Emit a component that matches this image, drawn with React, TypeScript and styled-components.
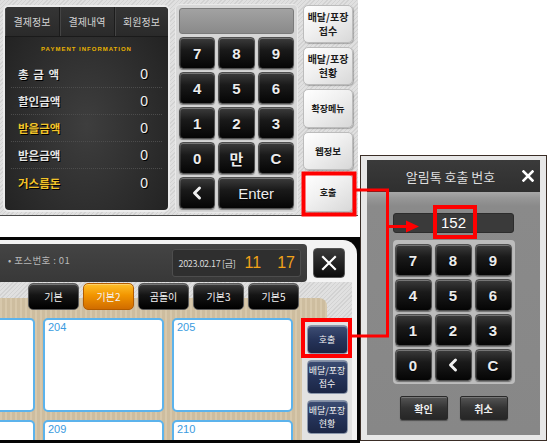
import React from 'react';
import styled, { createGlobalStyle } from 'styled-components';
import { ChevronLeft } from 'lucide-react';

const Global = createGlobalStyle`
  html, body { margin: 0; padding: 0; background: #fff; }
  body {
    width: 547px; height: 443px; overflow: hidden;
    font-family: "Noto Sans CJK KR", "Liberation Sans", sans-serif;
  }
  * { box-sizing: border-box; }
`;

const Canvas = styled.div`
  position: relative;
  width: 547px;
  height: 443px;
  background: #fff;
  overflow: hidden;
`;

const stripes = `repeating-linear-gradient(135deg, #d2d2d2 0px, #d2d2d2 1px, #e0e0e0 1px, #e0e0e0 3px)`;

/* ---------- shared keypad key ---------- */
const Key = styled.div<{ $span?: number; $small?: boolean }>`
  grid-column: span ${p => p.$span ?? 1};
  display: flex;
  align-items: center;
  justify-content: center;
  border-radius: 4px;
  border: 1px solid #4f4f4f;
  background: linear-gradient(180deg, #3c3c3c 0%, #1a1a1a 40%, #050505 100%);
  box-shadow: inset 0 1px 0 rgba(255, 255, 255, 0.3), inset 1px 0 0 rgba(255, 255, 255, 0.12), 0 1px 1px rgba(0,0,0,0.4);
  color: #ececec;
  font-family: ${p => (p.$small ? '"Liberation Sans", sans-serif' : '"Liberation Sans", "Noto Sans CJK KR", sans-serif')};
  font-weight: ${p => (p.$small ? 400 : 700)};
  font-size: 15px;
  text-shadow: 0 1px 1px #000;
`;

/* ---------- top screenshot: payment ---------- */
const PaymentScreen = styled.div`
  position: absolute;
  left: 0;
  top: 0;
  width: 358px;
  height: 216px;
  display: flex;
  gap: 5px;
  padding: 4px 5px 3px 3px;
  background: ${stripes};
  border-bottom: 1px solid #4a4a4a;
`;

const PayPanel = styled.div`
  width: 167px;
  margin-top: 1px;
  height: 207px;
  border: 2px solid #ececec;
  border-radius: 6px;
  background: radial-gradient(ellipse at 50% 58%, #3e3e3e 0%, #2d2d2d 55%, #1f1f1f 100%);
  display: flex;
  flex-direction: column;
  overflow: hidden;
`;

const PayTabs = styled.div`
  display: grid;
  grid-template-columns: 55px 55px 1fr;
  height: 30px;
  background: linear-gradient(180deg, #353535, #2a2a2a);
  border-bottom: 1px solid #1a1a1a;
`;

const PayTab = styled.div`
  display: flex;
  align-items: center;
  justify-content: center;
  color: #d4d4d4;
  font-size: 10px;
  border-right: 1px solid #1c1c1c;
  box-shadow: inset 1px 0 0 #444;
  &:last-child { border-right: none; }
`;

const PayCaption = styled.div`
  margin-top: 8px;
  height: 8px;
  line-height: 8px;
  text-align: center;
  color: #e9b300;
  font-family: "Liberation Sans", sans-serif;
  font-weight: 700;
  font-size: 6px;
  letter-spacing: 1px;
`;

const PayRows = styled.div`
  margin: 8px 6px 0 6px;
  display: flex;
  flex-direction: column;
`;

const PayRow = styled.div`
  height: 27px;
  display: flex;
  align-items: center;
  justify-content: space-between;
  padding: 0 14px 0 7px;
  border-bottom: 1px dotted #4c4c4c;
  &:last-child { border-bottom: none; }
`;

const PayLabel = styled.span<{ $gold?: boolean; $spaced?: boolean }>`
  font-size: 11.5px;
  font-weight: 700;
  color: ${p => (p.$gold ? '#f2c42a' : '#e4e4e4')};
  text-shadow: 1px 1px 0 #000;
  letter-spacing: ${p => (p.$spaced ? '1px' : '0')};
`;

const PayValue = styled.span`
  font-family: "Liberation Sans", sans-serif;
  font-size: 14px;
  color: #f0f0f0;
  text-shadow: 1px 1px 0 #000;
`;

const NumPad = styled.div`
  width: 123px;
  height: 209px;
  border-radius: 5px;
  background: #d7d7d7;
  box-shadow: inset 0 0 0 1px #e9e9e9;
  padding: 4px;
  display: flex;
  flex-direction: column;
  gap: 3px;
`;

const NumDisplay = styled.div`
  height: 27px;
  border-radius: 3px;
  border: 1px solid #7a7a7a;
  background: linear-gradient(180deg, #a2a2a2 0%, #8a8a8a 100%);
`;

const NumGrid = styled.div`
  display: grid;
  grid-template-columns: repeat(3, 1fr);
  grid-auto-rows: 32px;
  gap: 3px;
`;

const SideButtons = styled.div`
  width: 50px;
  margin-top: 1px;
  height: 207px;
  display: flex;
  flex-direction: column;
  gap: 4px;
`;

const SoftButton = styled.div<{ $size?: number }>`
  flex: 1;
  display: flex;
  align-items: center;
  justify-content: center;
  text-align: center;
  border-radius: 5px;
  border: 1px solid #bcbcbc;
  background: linear-gradient(145deg, #ffffff 0%, #f0f0f0 45%, #d8d8d8 100%);
  box-shadow: 1px 1px 1px rgba(0, 0, 0, 0.25);
  color: #1c1c1c;
  font-size: ${p => p.$size ?? 10}px;
  font-weight: 700;
  line-height: 14px;
  white-space: nowrap;
`;

/* ---------- bottom screenshot: tables ---------- */
const TableScreen = styled.div`
  position: absolute;
  left: 0;
  top: 237px;
  width: 360px;
  height: 206px;
  background: #050505;
  padding: 3px 3px 3px 0;
`;

const TableFrame = styled.div`
  height: 100%;
  background: #f3f3f3;
  border-radius: 0 14px 0 0;
  padding: 4px 5px 0 0;
  display: flex;
  flex-direction: column;
  overflow: hidden;
`;

const HeaderRow = styled.div`
  height: 38px;
  display: flex;
  align-items: center;
  gap: 6px;
  padding-right: 7px;
`;

const HeaderBar = styled.div`
  flex: 1;
  height: 38px;
  background: linear-gradient(180deg, #444 0%, #383838 100%);
  border-radius: 0 4px 4px 0;
  display: flex;
  align-items: center;
  padding: 0 6px 0 8px;
`;

const PosNo = styled.span`
  flex: 1;
  color: #b8b8b8;
  font-size: 9.5px;
  letter-spacing: 0.4px;
  align-self: flex-start;
  margin-top: 9px;
`;

const DateBox = styled.div`
  height: 28px;
  display: flex;
  align-items: center;
  padding: 0 6px 0 6px;
  border-radius: 3px;
  background: #2f2f2f;
  box-shadow: inset 0 0 0 1px #4d4d4d;
`;

const DateText = styled.span`
  color: #d8d8d8;
  font-size: 9px;
  letter-spacing: -0.3px;
  margin-right: 9px;
`;

const TimeText = styled.span<{ $gap?: number }>`
  color: #f2a219;
  font-family: "Liberation Sans", sans-serif;
  font-size: 16px;
  margin-left: ${p => p.$gap ?? 0}px;
`;

const CloseSquare = styled.div`
  width: 32px;
  height: 30px;
  border-radius: 4px;
  background: linear-gradient(180deg, #3a3a3a 0%, #0c0c0c 100%);
  border: 1px solid #555;
  display: flex;
  align-items: center;
  justify-content: center;
`;

const TableBody = styled.div`
  flex: 1;
  background: ${stripes};
  display: flex;
  flex-direction: column;
`;

const TabsRow = styled.div`
  position: relative;
  z-index: 1;
  height: 27px;
  margin-top: 1px;
  margin-bottom: -12px;
  padding-left: 28px;
  display: flex;
  gap: 4px;
`;

const GroupTab = styled.div<{ $active?: boolean }>`
  width: 51px;
  display: flex;
  align-items: center;
  justify-content: center;
  border-radius: 5px;
  border: 1px solid ${p => (p.$active ? '#b25c00' : '#5a5a5a')};
  background: ${p =>
    p.$active
      ? 'linear-gradient(180deg, #ffc02a 0%, #f29500 45%, #d06c00 100%)'
      : 'linear-gradient(180deg, #3d3d3d 0%, #141414 45%, #000 100%)'};
  box-shadow: inset 0 1px 0 rgba(255, 255, 255, 0.3);
  color: #f4f4f4;
  font-size: 10px;
`;

const TableContent = styled.div`
  flex: 1;
  display: flex;
  min-height: 0;
`;

const WoodFloor = styled.div`
  width: 327px;
  border-radius: 0 8px 0 0;
  padding-top: 20px;
  overflow: hidden;
  background:
    repeating-linear-gradient(90deg, rgba(255,255,255,0.08) 0px, rgba(255,255,255,0.08) 2px, rgba(0,0,0,0.03) 2px, rgba(0,0,0,0.03) 5px),
    #d4c3a4;
`;

const CardGrid = styled.div`
  display: grid;
  grid-template-columns: 35px 121px 121px;
  grid-template-rows: 94px 94px;
  column-gap: 8px;
  row-gap: 8px;
`;

const TableCard = styled.div<{ $cut?: boolean }>`
  background: #fff;
  border: 2.5px solid #5cb3ec;
  border-left-width: ${p => (p.$cut ? 0 : 2.5)}px;
  border-radius: ${p => (p.$cut ? '0 5px 5px 0' : '5px')};
  padding: 1px 3px;
  color: #3b9be0;
  font-family: "Liberation Sans", sans-serif;
  font-size: 11px;
  line-height: 12px;
`;

const BlueColumn = styled.div`
  width: 50px;
  margin-left: -25px;
  margin-top: 20px;
  background: #e2e2e2;
  display: flex;
  flex-direction: column;
  align-items: center;
  padding-top: 7px;
  gap: 6px;
`;

const BlueButton = styled.div<{ $h: number }>`
  width: 41px;
  height: ${p => p.$h}px;
  flex-shrink: 0;
  display: flex;
  align-items: center;
  justify-content: center;
  text-align: center;
  border-radius: 4px;
  border: 1px solid #8a96aa;
  background: linear-gradient(180deg, #3e4e74 0%, #26345a 50%, #1b2645 100%);
  box-shadow: inset 0 1px 0 rgba(255, 255, 255, 0.35);
  color: #f2f2f2;
  font-size: 9px;
  line-height: 13px;
  white-space: nowrap;
`;

/* ---------- popup ---------- */
const CallPopup = styled.div`
  position: absolute;
  left: 360px;
  top: 155px;
  width: 187px;
  height: 286px;
  border: 1px solid #3a2d26;
  background: #e7e7e7;
  padding: 4px 6px 5px 6px;
  display: flex;
  flex-direction: column;
`;

const PopupTitle = styled.div`
  height: 32px;
  background: linear-gradient(180deg, #3a3a3a 0%, #2f2f2f 100%);
  display: flex;
  align-items: center;
  padding: 0 6px 0 12px;
`;

const PopupTitleText = styled.span`
  flex: 1;
  text-align: center;
  color: #dedede;
  font-size: 13px;
`;

const PopupBody = styled.div`
  flex: 1;
  background: linear-gradient(180deg, #a8a8a8 0px, #979797 6px, #8a8a8a 14px, #878787 100%);
  display: flex;
  flex-direction: column;
  align-items: center;
  padding-top: 21px;
`;

const CallDisplay = styled.div`
  width: 121px;
  height: 20px;
  border-radius: 3px;
  background: #3a3a3a;
  border: 1px solid #2c2c2c;
  color: #fff;
  font-family: "Liberation Sans", sans-serif;
  font-size: 15px;
  line-height: 18px;
  text-align: center;
`;

const CallPad = styled.div`
  width: 122px;
  margin-top: 7px;
  border-radius: 4px;
  background: #bcbcbc;
  padding: 4px 3px 3px 2px;
  display: grid;
  grid-template-columns: repeat(3, 1fr);
  grid-auto-rows: 32px;
  gap: 3px;
`;

const ActionRow = styled.div`
  margin-top: 12px;
  display: flex;
  gap: 12px;
`;

const ActionButton = styled.div`
  width: 48px;
  height: 24px;
  display: flex;
  align-items: center;
  justify-content: center;
  border-radius: 2px;
  border: 1px solid #2a2a2a;
  background: linear-gradient(180deg, #555 0%, #333 50%, #262626 100%);
  box-shadow: inset 0 1px 0 rgba(255, 255, 255, 0.2), 0 1px 1px rgba(0, 0, 0, 0.4);
  color: #f0f0f0;
  font-size: 10px;
  font-weight: 700;
`;

/* ---------- annotations ---------- */
const Annotations = styled.svg`
  position: absolute;
  left: 0;
  top: 0;
  width: 547px;
  height: 443px;
  pointer-events: none;
  z-index: 10;
`;

const Chevron = () => <ChevronLeft size={20} strokeWidth={3.6} color="#f0f0f0" />;

const XMark = ({ size, w }: { size: number; w: number }) => (
  <svg width={size} height={size} viewBox="0 0 12 12">
    <path d="M1.5 1.5 L10.5 10.5 M10.5 1.5 L1.5 10.5" stroke="#fff" strokeWidth={w} strokeLinecap="square" />
  </svg>
);

const payRows = [
  { label: '총 금 액', gold: false, spaced: true },
  { label: '할인금액', gold: false, spaced: false },
  { label: '받을금액', gold: true, spaced: false },
  { label: '받은금액', gold: false, spaced: false },
  { label: '거스름돈', gold: true, spaced: false },
];

export default function App() {
  return (
    <>
      <Global />
      <Canvas>
        <PaymentScreen>
          <PayPanel>
            <PayTabs>
              <PayTab>결제정보</PayTab>
              <PayTab>결제내역</PayTab>
              <PayTab>회원정보</PayTab>
            </PayTabs>
            <PayCaption>PAYMENT INFORMATION</PayCaption>
            <PayRows>
              {payRows.map(r => (
                <PayRow key={r.label}>
                  <PayLabel $gold={r.gold} $spaced={r.spaced}>{r.label}</PayLabel>
                  <PayValue>0</PayValue>
                </PayRow>
              ))}
            </PayRows>
          </PayPanel>
          <NumPad>
            <NumDisplay />
            <NumGrid>
              {['7', '8', '9', '4', '5', '6', '1', '2', '3', '0', '만', 'C'].map(k => (
                <Key key={k}>{k}</Key>
              ))}
              <Key><Chevron /></Key>
              <Key $span={2} $small>Enter</Key>
            </NumGrid>
          </NumPad>
          <SideButtons>
            <SoftButton>배달/포장<br />접수</SoftButton>
            <SoftButton>배달/포장<br />현황</SoftButton>
            <SoftButton $size={9}>확장메뉴</SoftButton>
            <SoftButton $size={9.5}>웹정보</SoftButton>
            <SoftButton $size={9}>호출</SoftButton>
          </SideButtons>
        </PaymentScreen>

        <TableScreen>
          <TableFrame>
            <HeaderRow>
              <HeaderBar>
                <PosNo>• 포스번호 : 01</PosNo>
                <DateBox>
                  <DateText>2023.02.17 [금]</DateText>
                  <TimeText>11</TimeText>
                  <TimeText $gap={16}>17</TimeText>
                </DateBox>
              </HeaderBar>
              <CloseSquare><XMark size={16} w={1.6} /></CloseSquare>
            </HeaderRow>
            <TableBody>
              <TabsRow>
                <GroupTab>기본</GroupTab>
                <GroupTab $active>기본2</GroupTab>
                <GroupTab>곰돌이</GroupTab>
                <GroupTab>기본3</GroupTab>
                <GroupTab>기본5</GroupTab>
              </TabsRow>
              <TableContent>
                <WoodFloor>
                  <CardGrid>
                    <TableCard $cut />
                    <TableCard>204</TableCard>
                    <TableCard>205</TableCard>
                    <TableCard $cut />
                    <TableCard>209</TableCard>
                    <TableCard>210</TableCard>
                  </CardGrid>
                </WoodFloor>
                <BlueColumn>
                  <BlueButton $h={29}>호출</BlueButton>
                  <BlueButton $h={34}>배달/포장<br />접수</BlueButton>
                  <BlueButton $h={34}>배달/포장<br />현황</BlueButton>
                </BlueColumn>
              </TableContent>
            </TableBody>
          </TableFrame>
        </TableScreen>

        <CallPopup>
          <PopupTitle>
            <PopupTitleText>알림톡 호출 번호</PopupTitleText>
            <XMark size={12} w={2.6} />
          </PopupTitle>
          <PopupBody>
            <CallDisplay>152</CallDisplay>
            <CallPad>
              {['7', '8', '9', '4', '5', '6', '1', '2', '3', '0'].map(k => (
                <Key key={k}>{k}</Key>
              ))}
              <Key><Chevron /></Key>
              <Key>C</Key>
            </CallPad>
            <ActionRow>
              <ActionButton>확인</ActionButton>
              <ActionButton>취소</ActionButton>
            </ActionRow>
          </PopupBody>
        </CallPopup>

        <Annotations viewBox="0 0 547 443">
          <g fill="none" stroke="#ff0000">
            <rect x={303.5} y={173.5} width={51} height={41} strokeWidth={4} />
            <rect x={435} y={207} width={40} height={30} strokeWidth={4} />
            <rect x={303} y={320} width={47} height={36} strokeWidth={4} />
            <polyline points="356,190 387.5,190 387.5,336 352,336" strokeWidth={3} />
            <line x1={387.5} y1={226.5} x2={408} y2={226.5} strokeWidth={3} />
          </g>
          <polygon points="406,220.5 419,226.5 406,232.5" fill="#ff0000" />
        </Annotations>
      </Canvas>
    </>
  );
}
